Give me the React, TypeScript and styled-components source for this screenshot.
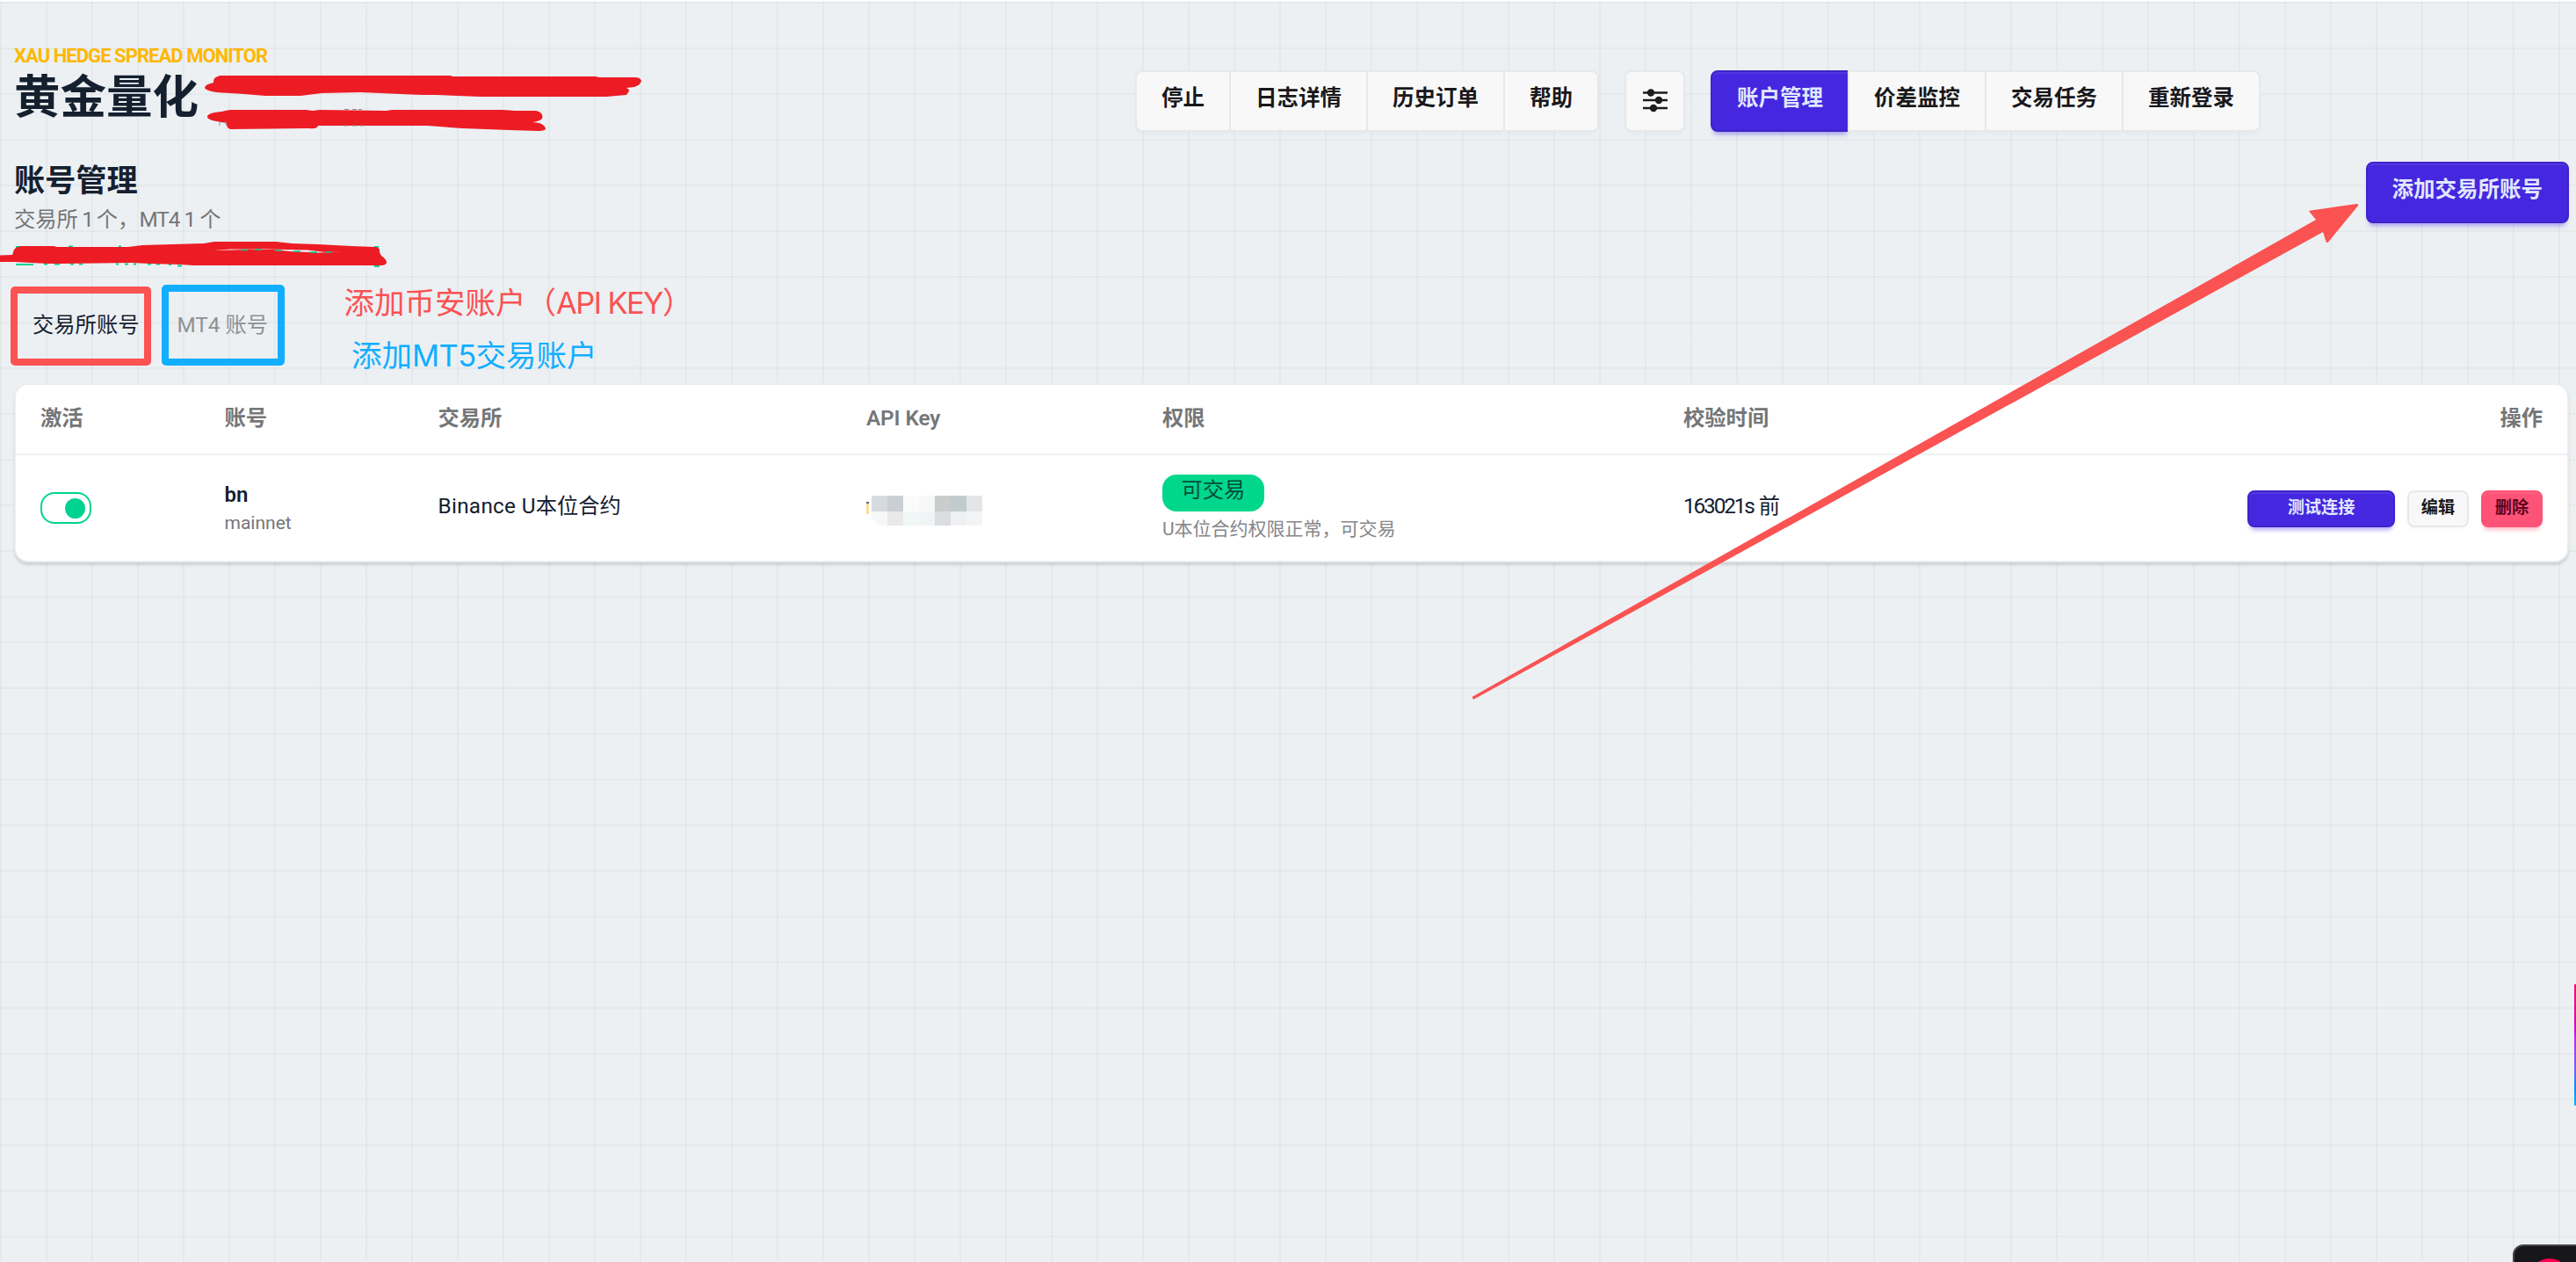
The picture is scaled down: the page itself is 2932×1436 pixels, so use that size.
import React, { useState } from 'react';
import styled, { createGlobalStyle, css } from 'styled-components';

const toolbarActions = ['停止', '日志详情', '历史订单', '帮助'];
const navItems = ['账户管理', '价差监控', '交易任务', '重新登录'];

const mosaic = [
  ['#d6dbdf', '#cbcfd4', '#fbfbfc', '#f7f8f8', '#c9cdce', '#c2cacd', '#e3e6e8'],
  ['#f5f7f8', '#e9e9e9', '#f1f6f6', '#f1f4f4', '#dcdde0', '#eff0f2', '#f2f4f5'],
];

const SlidersIcon = () => (
  <svg width="30" height="30" viewBox="0 0 30 30" fill="none" aria-hidden="true">
    <path d="M1 6.5H29M1 15H29M1 24H29" stroke="#1c1c1f" strokeWidth="2.6" />
    <circle cx="10" cy="6.5" r="4.2" fill="#1c1c1f" />
    <circle cx="19" cy="15" r="4.2" fill="#1c1c1f" />
    <circle cx="13" cy="24" r="4.2" fill="#1c1c1f" />
  </svg>
);

const Markup = () => (
  <MarkupLayer viewBox="0 0 2932 1436" aria-hidden="true">
    {/* remains of the covered status line */}
    <path
      d="M18 281h6M78 280.500h5M135 280.500h3M426 281h5M18 301h20M50 300.500h4M62 300.500h6M80 300.500h4M90 300.500h4M132 300.500h3M142 300.500h4M152 300.500h3M168 300.500h4M178 300.500h4M192 301h3M202 302.500h5M426 303h6"
      stroke="#00d390"
      strokeWidth="1.8"
    />
    <g fill="#ed1c24">
      <path d="M248 87 Q243 88 243 93 V94 Q233 96 233 100 Q234 103 246 105 L278 107 L302 109 L342 109 L366 106 L410 105 L480 108 L496 108 L546 110 L690 110 L713 108 Q719 102 713 100 L722 99 Q729 97 730 92 Q729 88 722 88 L682 88 L678 87 L515 87 L513 86 L250 86 Z" />
      <path d="M262 125 L348 125 L356 126 L364 125 L440 126 L446 125 L572 125 L586 126 L610 126 Q619 128 617 135 Q614 138 606 139 L614 140 Q621 143 621 147 Q619 149 612 149 L580 148 L526 146 L486 143 L362 143 Q361 147 352 146 L262 147 Q257 145 258 140 L246 138 Q235 136 236 132 Q238 128 252 127 Z" />
    </g>
    <path
      d="M0 290.500 L14 290 L16 284 Q18 281 24 280 L62 280 L64 281 L146 281 L162 279 L196 278 L232 277 L244 275 L314 275 L332 277 L362 278 L400 280 L426 281 Q433 281 432 287 L434 291 Q440 295 440 299 Q439 302 434 302 L220 302 L206 301 L170 300 L150 299 L72 300 L54 300 L16 298 L0 298 Z"
      fill="#ed1c24"
    />
    <path d="M243 285 L262 283.500 L312 284 L330 286 L362 287.500 L392 286.500 L370 287 L350 284.500 L300 283.500 Z" fill="#ecf0f3" />
    <path d="M274 284.500h8M290 284h8M313 285h8M334 286h8M352 287h9M370 287h8" stroke="#00c98c" strokeWidth="1.6" />
    <path d="M250 143v-5M257 138v4M392 124.500h5M401 124.500h5M408 124.500h4M391 143h4M401 143h5M410 143h4" stroke="#8d8a90" strokeWidth="1" />
    <path d="M1675.500 793 L2636 250 L2628.500 241 Q2628 239.500 2630 239.500 L2682 232 Q2685 232 2684 234 L2650 275.500 Q2648 276.500 2647.500 275 L2644 264 L1677 796 Z" fill="#fb5252" />
  </MarkupLayer>
);

const App: React.FC = () => {
  const [activeNav, setActiveNav] = useState(0);
  const [tab, setTab] = useState(0);

  return (
    <>
      <GlobalStyle />
      <Page>
        <Header>
          <Brand>
            <Eyebrow>XAU HEDGE SPREAD MONITOR</Eyebrow>
            <BrandTitle>黄金量化</BrandTitle>
          </Brand>
          <Toolbar>
            <Join>
              {toolbarActions.map((label) => (
                <JoinButton key={label} type="button">{label}</JoinButton>
              ))}
            </Join>
            <SettingsButton type="button" aria-label="设置">
              <SlidersIcon />
            </SettingsButton>
            <Join>
              {navItems.map((label, i) => (
                <JoinButton key={label} type="button" $primary={i === activeNav} onClick={() => setActiveNav(i)}>
                  {label}
                </JoinButton>
              ))}
            </Join>
          </Toolbar>
        </Header>

        <SectionHeader>
          <div>
            <SectionTitle>账号管理</SectionTitle>
            <SectionMeta>
              交易所<Latin $tracking={-1.6}> 1 </Latin>个，<Latin $tracking={-1}>MT4 1 </Latin>个
            </SectionMeta>
          </div>
          <AddButton type="button">添加交易所账号</AddButton>
        </SectionHeader>

        <Tabs>
          <Tab type="button" $active={tab === 0} onClick={() => setTab(0)}>交易所账号</Tab>
          <Tab type="button" $active={tab === 1} onClick={() => setTab(1)}>MT4 账号</Tab>
        </Tabs>

        <Card>
          <HeadRow>
            <span>激活</span>
            <span>账号</span>
            <span>交易所</span>
            <Latin $tracking={-0.1}>API Key</Latin>
            <span>权限</span>
            <span>校验时间</span>
            <RightCell>操作</RightCell>
          </HeadRow>
          <BodyRow>
            <Toggle role="switch" aria-checked="true">
              <Knob />
            </Toggle>
            <div>
              <AccountName>bn</AccountName>
              <AccountEnv>mainnet</AccountEnv>
            </div>
            <CellText>
              <Latin $tracking={0.3}>Binance U</Latin>本位合约
            </CellText>
            <MaskedKey>
              <KeyEdge />
              <Mosaic>
                {mosaic.flat().map((color, i) => (
                  <MosaicCell key={i} $color={color} />
                ))}
              </Mosaic>
            </MaskedKey>
            <Permission>
              <Badge>可交易</Badge>
              <Hint>U本位合约权限正常，可交易</Hint>
            </Permission>
            <CellText>
              <Latin $tracking={-2.1}>163021s</Latin>
              {' '}前
            </CellText>
            <Actions>
              <SmallButton type="button" $tone="primary">测试连接</SmallButton>
              <SmallButton type="button">编辑</SmallButton>
              <SmallButton type="button" $tone="danger">删除</SmallButton>
            </Actions>
          </BodyRow>
        </Card>

        <Frame $color="#fb5252" $x={12} $y={326} $w={160} $h={90} />
        <Frame $color="#12aeff" $x={184} $y={324} $w={140} $h={92} />
        <Note $color="#fb5252" $x={391.5} $y={321}>添加币安账户（<Latin $tracking={-1.6}>API KEY</Latin>）</Note>
        <Note $color="#12aeff" $x={400} $y={381}>添加<Latin $tracking={-0.6}>MT5</Latin>交易账户</Note>
        <Markup />
        <EdgeStrip />
        <CornerWidget>
          <CornerDot />
        </CornerWidget>
      </Page>
    </>
  );
};

export default App;

const GlobalStyle = createGlobalStyle`
  * {
    box-sizing: border-box;
  }

  body {
    margin: 0;
    overflow: hidden;
  }

  body, button {
    font-family: Roboto, "Noto Sans CJK SC", sans-serif;
  }
`

const primary = '#4527df'
const ink = '#15202f'
const muted = '#757678'

const Page = styled.div`
  position: relative;
  height: 1436px;
  overflow: hidden;
  padding: 50px 8px 0 16px;
  border-top: 2px solid #fdfdfd;
  color: ${ink};
  background-color: #ecf0f3;
  background-image:
    linear-gradient(rgba(20, 30, 40, 0.035) 2px, transparent 2px),
    linear-gradient(90deg, rgba(20, 30, 40, 0.035) 2px, transparent 2px);
  background-size: 52px 52px;
`

const Header = styled.header`
  display: grid;
  grid-template-columns: 1276px auto;
  align-items: start;
  height: 132px;
`

const Brand = styled.div`
  display: flex;
  flex-direction: column;
`

const Eyebrow = styled.div`
  font-size: 22px;
  line-height: 24px;
  height: 29px;
  font-weight: 700;
  letter-spacing: -0.95px;
  color: #ffb700;
  white-space: nowrap;
`

const BrandTitle = styled.h1`
  margin: 0;
  font-size: 52.5px;
  line-height: 60px;
  font-weight: 700;
`

const Toolbar = styled.div`
  display: flex;
  gap: 29px;
  margin-top: 28px;
`

const Join = styled.div`
  display: flex;
`

const primaryButton = css`
  background: ${primary};
  border-color: #3e23ca;
  color: #e0e7ff;
  box-shadow: inset 0 2px 0 rgba(255, 255, 255, 0.08), 0 6px 5px -3px rgba(69, 39, 223, 0.4);
`

const Button = styled.button`
  display: inline-flex;
  align-items: center;
  justify-content: center;
  height: 70px;
  margin: 0;
  padding: 0 28px 6px;
  border: 2px solid #e8e8e8;
  border-radius: 8px;
  background: #f8f8f8;
  color: #18181b;
  font-size: 24.5px;
  line-height: 30px;
  font-weight: 700;
  white-space: nowrap;
  cursor: pointer;
  box-shadow: 0 4px 4px -2px rgba(0, 0, 0, 0.03);
`

const JoinButton = styled(Button)<{ $primary?: boolean }>`
  border-radius: 0;

  &:not(:first-child) {
    margin-left: -2px;
  }

  &:first-child {
    border-radius: 8px 0 0 8px;
  }

  &:last-child {
    border-radius: 0 8px 8px 0;
  }

  ${(p) => p.$primary && primaryButton}
`

const SettingsButton = styled(Button)`
  width: 69px;
  padding: 0 0 2px;
`

const AddButton = styled(Button)`
  ${primaryButton}
`

const SectionHeader = styled.section`
  display: flex;
  justify-content: space-between;
  align-items: flex-start;
  height: 172px;
`

const SectionTitle = styled.h2`
  margin: 2px 0 0;
  font-size: 35.2px;
  line-height: 40px;
  font-weight: 700;
`

const SectionMeta = styled.p`
  margin: 9px 0 0;
  font-size: 24.3px;
  line-height: 30px;
  color: ${muted};
`

const Latin = styled.span<{ $tracking: number }>`
  letter-spacing: ${(p) => p.$tracking}px;
`

const Tabs = styled.div`
  display: flex;
  height: 80px;
  padding-left: 21px;
  gap: 43px;
  align-items: flex-start;
`

const Tab = styled.button<{ $active: boolean }>`
  padding: 0;
  border: none;
  background: none;
  font-size: 24.3px;
  line-height: 28px;
  color: ${(p) => (p.$active ? ink : '#8e9196')};
  cursor: pointer;
`

const Card = styled.section`
  border: 2px solid #ececec;
  border-radius: 16px;
  background: #fff;
  box-shadow: 0 3px 3px rgba(0, 0, 0, 0.13);
`

const Row = styled.div`
  display: grid;
  grid-template-columns: 209.5px 243px 487.5px 337px 593px 300px 1fr;
  align-items: center;
  padding: 0 28px;
`

const HeadRow = styled(Row)`
  height: 80px;
  padding-bottom: 2px;
  border-bottom: 2px solid #f1f1f2;
  color: ${muted};
  font-size: 24.3px;
  line-height: 30px;
  font-weight: 600;
`

const BodyRow = styled(Row)`
  height: 120px;
`

const RightCell = styled.span`
  text-align: right;
`

const Toggle = styled.div`
  display: flex;
  align-items: center;
  justify-content: flex-end;
  width: 58px;
  height: 36px;
  padding-right: 5px;
  border: 2px solid #00d390;
  border-radius: 16px;
`

const Knob = styled.span`
  width: 23px;
  height: 23px;
  border-radius: 50%;
  background: #00d390;
`

const AccountName = styled.div`
  font-size: 24px;
  line-height: 34px;
  font-weight: 600;
`

const AccountEnv = styled.div`
  font-size: 21px;
  line-height: 30px;
  color: ${muted};
`

const CellText = styled.span`
  padding-bottom: 4px;
  font-size: 24.3px;
  line-height: 32px;
  white-space: nowrap;
`

const MaskedKey = styled.div`
  display: flex;
  align-items: center;
  gap: 3px;
  padding-top: 6px;
`

const KeyEdge = styled.span`
  width: 3px;
  height: 14px;
  margin-bottom: 6px;
  background: linear-gradient(#6a6561 2px, #fbdc9c 2px);
`

const Mosaic = styled.div`
  display: grid;
  grid-template-columns: repeat(7, 18px);
  grid-template-rows: 18px 16px;
  width: 126px;
  border-radius: 2px 0 0 14px;
  overflow: hidden;
`

const MosaicCell = styled.span<{ $color: string }>`
  background: ${(p) => p.$color};
`

const Permission = styled.div`
  display: flex;
  flex-direction: column;
  align-items: flex-start;
  gap: 5px;
`

const Badge = styled.span`
  height: 42px;
  padding: 0 21.5px;
  border-radius: 16px;
  background: #00d78c;
  color: #004c39;
  font-size: 24.3px;
  line-height: 36px;
`

const Hint = styled.span`
  font-size: 21px;
  line-height: 30px;
  color: #858689;
`

const Actions = styled.div`
  display: flex;
  justify-content: flex-end;
  gap: 14px;
  padding-top: 2px;
`

const SmallButton = styled(Button)<{ $tone?: 'primary' | 'danger' }>`
  width: ${(p) => (p.$tone === 'primary' ? 168 : 70)}px;
  height: 42px;
  padding: 0 0 3px;
  font-size: 19.2px;
  line-height: 24px;

  ${(p) => p.$tone === 'primary' && primaryButton}
  ${(p) =>
    p.$tone === 'danger' &&
    css`
      background: #ff5277;
      border-color: #ff5277;
      color: #5c0420;
      box-shadow: inset 0 2px 0 rgba(255, 255, 255, 0.08), 0 6px 5px -3px rgba(255, 82, 119, 0.4);
    `}
`

// hand-drawn notes that sit on top of the page
interface PlacedProps {
  $color: string;
  $x: number;
  $y: number;
}

const Frame = styled.div<PlacedProps & { $w: number; $h: number }>`
  position: absolute;
  left: ${(p) => p.$x}px;
  top: ${(p) => p.$y - 2}px;
  width: ${(p) => p.$w}px;
  height: ${(p) => p.$h}px;
  border: 8px solid ${(p) => p.$color};
  border-radius: 5px;
  pointer-events: none;
`

const Note = styled.div<PlacedProps>`
  position: absolute;
  left: ${(p) => p.$x}px;
  top: ${(p) => p.$y - 2}px;
  color: ${(p) => p.$color};
  font-family: Inter, "Noto Sans CJK SC", sans-serif;
  font-size: 34.5px;
  line-height: 48px;
  white-space: nowrap;
  pointer-events: none;
`

const MarkupLayer = styled.svg`
  position: absolute;
  left: 0;
  top: -2px;
  width: 2932px;
  height: 1436px;
  pointer-events: none;
`

const EdgeStrip = styled.div`
  position: absolute;
  right: 0;
  top: 1118px;
  width: 2px;
  height: 138px;
  background: linear-gradient(#ff0066, #d400c8 35%, #b52cf5 46%, #6f62ff 70%, #0090ff 86%, #00b4ff);
`

const CornerWidget = styled.div`
  position: absolute;
  left: 2860px;
  top: 1414px;
  width: 84px;
  height: 60px;
  border: 2px solid #454547;
  border-radius: 12px;
  background: #17171a;
  overflow: hidden;
`

const CornerDot = styled.span`
  position: absolute;
  left: 17px;
  top: 14px;
  width: 46px;
  height: 46px;
  border-radius: 50%;
  background: #ff0050;
`
